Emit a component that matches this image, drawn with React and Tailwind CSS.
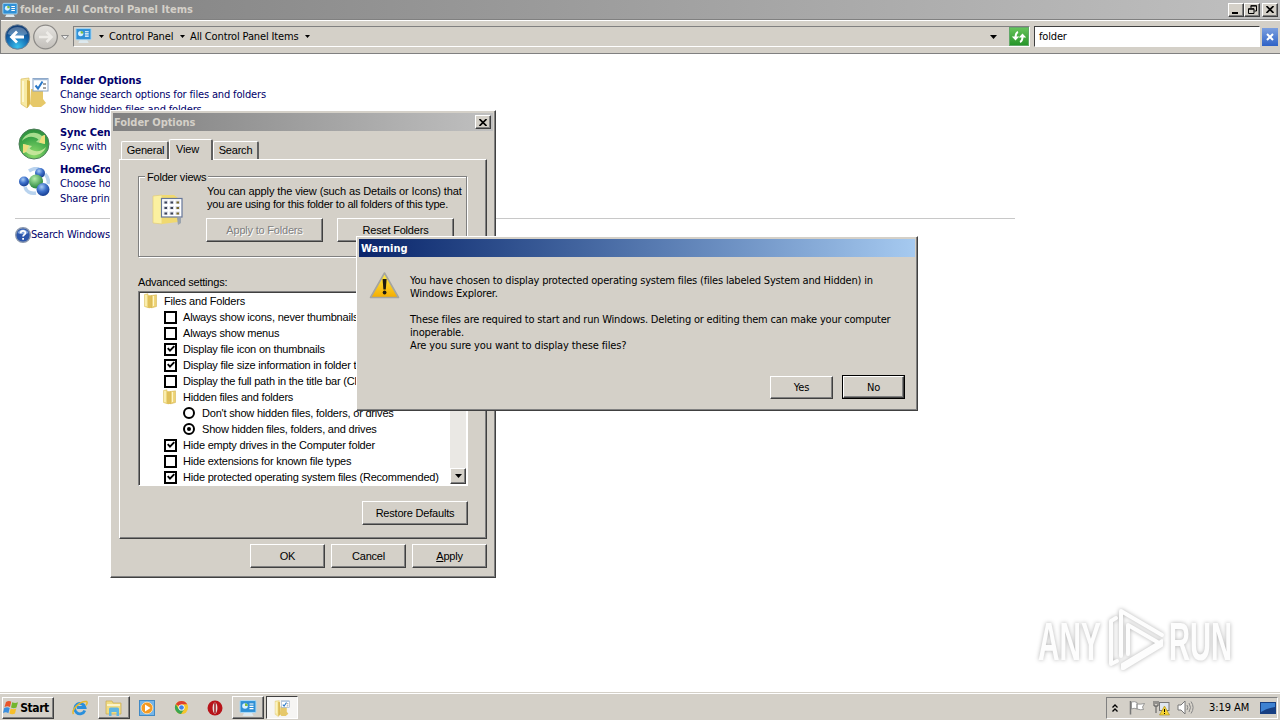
import React from "react";
import clsx from "clsx";

const RAISED =
  "border border-t-white border-l-white border-r-[#404040] border-b-[#404040] shadow-[inset_-1px_-1px_0_#808080]";
const SUNKEN =
  "border border-t-[#808080] border-l-[#808080] border-r-white border-b-white";
const UI = "font-['DejaVu_Sans_Condensed','DejaVu_Sans',sans-serif] text-[11px] font-stretch-condensed tracking-[-0.17px]";
const SANS = "font-['Liberation_Sans',sans-serif] text-[11px] tracking-[-0.2px]";

const SETTINGS = [
  { type: "folder", level: 0, label: "Files and Folders" },
  { type: "check", level: 1, label: "Always show icons, never thumbnails" },
  { type: "check", level: 1, label: "Always show menus" },
  { type: "check", level: 1, label: "Display file icon on thumbnails", on: true },
  { type: "check", level: 1, label: "Display file size information in folder tips", on: true },
  { type: "check", level: 1, label: "Display the full path in the title bar (Classic theme only)" },
  { type: "folder", level: 1, label: "Hidden files and folders" },
  { type: "radio", level: 2, label: "Don't show hidden files, folders, or drives" },
  { type: "radio", level: 2, label: "Show hidden files, folders, and drives", on: true },
  { type: "check", level: 1, label: "Hide empty drives in the Computer folder", on: true },
  { type: "check", level: 1, label: "Hide extensions for known file types" },
  { type: "check", level: 1, label: "Hide protected operating system files (Recommended)", on: true },
];

const LEVELS = ["pl-[3px]", "pl-[22px]", "pl-[41px]"];

function PanelIcon({ className }) {
  return (
    <svg viewBox="0 0 18 18" className={className}>
      <rect x="1" y="1.5" width="16" height="12" rx="1" fill="#3b9bdc" stroke="#a9d6f2" />
      <rect x="2" y="2.5" width="14" height="10" fill="#2f8fd5" />
      <circle cx="6" cy="7" r="2.8" fill="#d8f0ff" />
      <path d="M6 7V4.2A2.8 2.8 0 0 1 8.8 7z" fill="#7fbf3c" />
      <path d="M10.5 5h4M10.5 7.3h4M10.5 9.6h4" stroke="#fff" strokeWidth="1.2" />
      <path d="M5 14h8l1.5 3h-11z" fill="#dce8ee" />
    </svg>
  );
}

function FolderIcon({ className }) {
  return (
    <svg viewBox="0 0 16 16" className={className}>
      <path d="M1.500 1.500 5 .8v13.900l-3.500-1.200z" fill="#f4e08a" stroke="#d9bd58" strokeWidth=".5" />
      <path d="M5 2.200h4v12.500l-3 .5-1-.5z" fill="#e0c05a" />
      <path d="M8.500 2.500l5-.7v11.700l-5 1.400z" fill="#eed273" stroke="#cfae4b" strokeWidth=".5" />
      <path d="M3 2v11M10.500 3v10" stroke="#fdf6c8" strokeWidth="1.200" />
    </svg>
  );
}

function FolderOptionsIcon({ className }) {
  return (
    <svg viewBox="0 0 32 34" className={className}>
      <path d="M13 14h12v10l3 4-5 4h-8l-3-3z" fill="#e6c869" />
      <path d="M3 4l8-1v28l-2 2-6-4z" fill="#f7e9a2" stroke="#d8bd62" strokeWidth=".7" />
      <path d="M9 5l3 1v23l-3 4z" fill="#d8b54c" />
      <path d="M5 6v21" stroke="#fffbdc" strokeWidth="1.500" />
      <rect x="15" y="3.500" width="15" height="12.500" fill="#fff" stroke="#8aa4c6" />
      <path d="M15.500 4.500h14" stroke="#9fb8d6" strokeWidth="1.500" />
      <path d="M17.500 10.500l2.500 3 4.500-7" fill="none" stroke="#2a78c8" strokeWidth="2" />
      <path d="M25 9h3M25 13h3" stroke="#444" />
    </svg>
  );
}

function SyncIcon() {
  return (
    <svg viewBox="0 0 32 32" className="size-8">
      <defs>
        <radialGradient id="sync" cx=".5" cy=".85" r=".9">
          <stop offset="0" stopColor="#8fdc6c" />
          <stop offset=".6" stopColor="#3da648" />
          <stop offset="1" stopColor="#2a8a3a" />
        </radialGradient>
      </defs>
      <circle cx="16" cy="16" r="15" fill="url(#sync)" stroke="#4d7d58" />
      <path d="M4 13C7 5 17 2 24 8l3-1v9l-9-2 2.500-2.500C15 7 8 8.500 4 13z" fill="#a7dd8e" />
      <path d="M28 19C25 27 15 30 8 24l-3 1v-9l9 2-2.500 2.500C17 25 24 23.500 28 19z" fill="#c4e59a" />
      <path d="M24 8l3-1v9l-6-1.400zM8 24l-3 1v-9l6 1.400z" fill="#ecdf7c" />
    </svg>
  );
}

function HomeGroupIcon() {
  return (
    <svg viewBox="0 0 32 30" className="h-[30px] w-8">
      <defs>
        <radialGradient id="ball" cx=".4" cy=".3" r=".7">
          <stop offset="0" stopColor="#a9ccf4" />
          <stop offset=".5" stopColor="#3f72cc" />
          <stop offset="1" stopColor="#153d92" />
        </radialGradient>
        <radialGradient id="green" cx=".4" cy=".3" r=".7">
          <stop offset="0" stopColor="#b5edab" />
          <stop offset="1" stopColor="#23833a" />
        </radialGradient>
      </defs>
      <path d="M7 20c1 4 5 7 11 6M27 7c3 3 4 6 3 10M11 4c3-2 7-3 10-2" fill="none" stroke="#b9d3ee" strokeWidth="3.500" />
      <circle cx="22" cy="6" r="5" fill="url(#ball)" />
      <circle cx="6" cy="14.500" r="5" fill="url(#ball)" />
      <circle cx="18" cy="14.500" r="7" fill="url(#green)" />
      <circle cx="25" cy="22.500" r="6.500" fill="url(#ball)" />
    </svg>
  );
}

function HelpIcon() {
  return (
    <svg viewBox="0 0 16 16" className="size-4">
      <circle cx="8" cy="8" r="7.300" fill="#2c56ab" stroke="#8a98ae" strokeWidth="1.400" />
      <path d="M2.500 6a6 6 0 0 1 11 0Q8 8.500 2.500 6z" fill="#7fa3dc" />
      <path d="M5.600 6.300C5.600 3 10.500 3.200 10.400 6c0 1.600-2.300 1.700-2.300 3.600M8.100 11v1.800" fill="none" stroke="#fff" strokeWidth="1.800" />
    </svg>
  );
}

function FolderViewsIcon() {
  return (
    <svg viewBox="0 0 32 32" className="size-8">
      <path d="M1 2l9-1v29l-9-1z" fill="#fbf0a0" stroke="#e3cd78" strokeWidth=".7" />
      <path d="M10 1h12l4 3v24l-16 2z" fill="#f0d970" />
      <path d="M25 24h4v5l-3 2z" fill="#9aa3ad" />
      <rect x="9.500" y="4.500" width="20.500" height="18.500" fill="#fff" stroke="#66779a" strokeWidth="1.200" />
      {[7.5, 13, 18.5].map((y) =>
        [11.5, 17.5, 23.5].map((x) => (
          <g key={`${x}-${y}`}>
            <rect x={x} y={y - 1} width="4.500" height="3.500" fill="#d9dce6" />
            <rect x={x + 1} y={y} width="2.500" height="2" fill={x > 23 ? "#7a6a2c" : "#3c4358"} />
          </g>
        ))
      )}
    </svg>
  );
}

function WarningIcon() {
  return (
    <svg viewBox="0 0 32 30" className="h-[30px] w-8">
      <defs>
        <linearGradient id="warn" x1="0" y1="0" x2="0" y2="1">
          <stop offset="0" stopColor="#ffee4a" />
          <stop offset="1" stopColor="#f4ac00" />
        </linearGradient>
      </defs>
      <path d="M15.500 3 29.500 27.500h-28z" fill="url(#warn)" stroke="#a5a5a0" strokeWidth="1.600" strokeLinejoin="round" />
      <path d="M13.600 9h4l-.8 10.500h-2.400z" fill="#1c1a10" />
      <circle cx="15.600" cy="22.500" r="1.900" fill="#1c1a10" />
    </svg>
  );
}

function Caret({ className }) {
  return (
    <svg viewBox="0 0 7 4" className={clsx("shrink-0", className)}>
      <path d="M0 0h7L3.500 4z" fill="#000" />
    </svg>
  );
}

function CloseGlyph() {
  return (
    <svg viewBox="0 0 8 7" className="h-[7px] w-2">
      <path d="M.5 0 7.500 7M7.500 0 .5 7" stroke="#000" strokeWidth="1.600" />
    </svg>
  );
}

function Button({ children, className, disabled }) {
  return (
    <button
      className={clsx(
        RAISED,
        "flex shrink-0 items-center justify-center bg-[#d4d0c8] whitespace-nowrap",
        disabled && "text-[#808080] [text-shadow:1px_1px_0_#fff]",
        className
      )}
    >
      {children}
    </button>
  );
}

function ExplorerHeader() {
  return (
    <header className={UI}>
      <div className="flex h-[19px] items-center bg-linear-to-r from-[#808080] to-[#c0c0c0] pr-0.5 pl-0.5">
        <PanelIcon className="size-4" />
        <span className="ml-0.5 flex-1 pt-0.5 font-bold tracking-[0.03px] text-[#d4d0c8]">folder - All Control Panel Items</span>
        <Button className="h-[14px] w-4">
          <span className="mt-1.5 mr-0.5 h-0.5 w-1.5 bg-black" />
        </Button>
        <Button className="h-[14px] w-4">
          <svg viewBox="0 0 9 9" className="size-[9px]">
            <path d="M3 3V.7h5.500V6H6.500M2.500 1h6" fill="none" stroke="#000" />
            <path d="M.5 3.700h5.500V8.500H.5zM.5 4.200H6" fill="none" stroke="#000" />
          </svg>
        </Button>
        <Button className="ml-0.5 h-[14px] w-4">
          <CloseGlyph />
        </Button>
      </div>
      <div className="flex h-[35px] items-center border-t border-b border-l border-[#808080] bg-[#d4d0c8] pl-[3px] shadow-[inset_0_1px_0_#fff]">
        <svg viewBox="0 0 66 28" className="h-7 w-[66px]">
          <defs>
            <radialGradient id="back" cx=".5" cy=".9" r=".8">
              <stop offset="0" stopColor="#39c1ee" />
              <stop offset=".6" stopColor="#1467ae" />
              <stop offset="1" stopColor="#123f78" />
            </radialGradient>
            <linearGradient id="fwd" x1="0" y1="0" x2="0" y2="1">
              <stop offset="0" stopColor="#e6e4e0" />
              <stop offset="1" stopColor="#c2bfba" />
            </linearGradient>
          </defs>
          <circle cx="13.500" cy="14" r="12.200" fill="url(#back)" stroke="#6d7f92" />
          <path d="M3.500 11a10.500 10 0 0 1 20 0Q13 15 3.500 11z" fill="#fff" opacity=".28" />
          <path d="M20 14H8M13 8.500 7.500 14l5.500 5.500" fill="none" stroke="#fff" strokeWidth="2.800" />
          <circle cx="41.500" cy="14" r="11.800" fill="url(#fwd)" stroke="#8d8b88" strokeWidth="1.300" />
          <path d="M35 14h12M42.500 9l5 5-5 5" fill="none" stroke="#eeece8" strokeWidth="2.500" />
          <path d="M57.500 12.500h7l-3.500 4z" fill="#eee" stroke="#8a8a8a" />
        </svg>
        <div className={clsx(SUNKEN, "ml-[3px] flex h-[21px] w-[957px] items-center pl-px")}>
          <PanelIcon className="-mt-0.5 size-[17px]" />
          <Caret className="ml-[7px] h-[3px] w-[5px]" />
          <span className="ml-[5px] w-[66px] pt-px tracking-[-0.08px] whitespace-nowrap">Control Panel</span>
          <Caret className="mr-[5px] ml-[5px] h-[3px] w-[5px]" />
          <span className="w-[109px] pt-px tracking-[-0.14px] whitespace-nowrap">All Control Panel Items</span>
          <Caret className="ml-1.5 h-[3px] w-[5px]" />
          <Caret className="mr-3 ml-auto h-1 w-[7px]" />
          <span className="flex h-[19px] w-5 items-center justify-center border border-[#62a868] bg-linear-to-b from-[#65c35a] to-[#25962a]">
            <svg viewBox="0 0 16 14" className="h-3.5 w-4">
              <path d="M7 2Q4.500 3 4.500 8M9 12q2.500-1 2.500-6" fill="none" stroke="#fff" strokeWidth="2" />
              <path d="M.8 6.500h7.400L4.500 10.500zM7.800 7.500h7.400L11.500 3.500z" fill="#fff" />
            </svg>
          </span>
        </div>
        <div className="ml-1 flex h-[21px] w-[226px] items-center border border-t-[#404040] border-r-white border-b-white border-l-[#404040] bg-white pt-0.5 pl-1">
          folder
        </div>
        <span className="ml-0.5 flex h-[18px] w-4 items-center justify-center bg-linear-to-b from-[#7c9fdf] to-[#2f62c6]">
          <svg viewBox="0 0 8 8" className="size-2">
            <path d="M1 1l6 6M7 1 1 7" stroke="#fff" strokeWidth="2" />
          </svg>
        </span>
      </div>
    </header>
  );
}

function Entry({ icon, title, links, className }) {
  return (
    <section className={clsx("flex", className)}>
      <div className="w-[42px] shrink-0">{icon}</div>
      <div className="whitespace-nowrap">
        <h2 className="h-[13px] leading-[14px] font-bold tracking-[-0.05px]">{title}</h2>
        {links.map((link) => (
          <p key={link} className="h-[15px] leading-[15px] tracking-[-0.15px]">
            {link}
          </p>
        ))}
      </div>
    </section>
  );
}

function ControlPanelItems() {
  return (
    <main className={clsx(UI, "relative flex-1 pt-5 text-[#00006b]")}>
      <div className="flex flex-col pl-[18px]">
        <Entry
          icon={<FolderOptionsIcon className="mt-px h-[34px] w-8" />}
          title="Folder Options"
          links={["Change search options for files and folders", "Show hidden files and folders"]}
        />
        <Entry className="mt-[9px]" icon={<div className="mt-0.5"><SyncIcon /></div>} title="Sync Center" links={["Sync with"]} />
        <Entry className="mt-[3px]" icon={<div className="mt-1"><HomeGroupIcon /></div>} title="HomeGroup" links={["Choose homegroup", "Share printers"]} />
      </div>
      <div className="mt-3 ml-[15px] h-px w-[1000px] bg-[#c8c8c8]" />
      <div className="mt-2 ml-[15px] flex items-center whitespace-nowrap">
        <HelpIcon />
        Search Windows
      </div>
      <Watermark />
    </main>
  );
}

function Watermark() {
  return (
    <svg
      viewBox="0 0 220 80"
      className="absolute right-[30px] bottom-2 h-20 w-[220px] overflow-visible drop-shadow-[0_0_2px_rgba(0,0,0,0.3)]"
    >
      <g fill="#fdfdfd" fontFamily="Liberation Sans" fontWeight="700" fontSize="53" letterSpacing="0">
        <text transform="translate(8 56) scale(.563 1)">ANY</text>
        <text transform="translate(139 56) scale(.549 1)">RUN</text>
      </g>
      <g fill="none" stroke="#fdfdfd" strokeWidth="4" strokeLinejoin="round" strokeLinecap="round">
        <path d="M86 14 81 17V60L87 57" />
        <path d="M91 52V7L132 31" />
        <path d="M98 50V21L129 39" />
        <path d="M92 65V60L132 36V42L94 65z" fill="#fdfdfd" strokeWidth="2" />
      </g>
    </svg>
  );
}

function SettingMark({ type, on }) {
  if (type === "folder") return <FolderIcon className="size-4" />;
  if (type === "radio") {
    return (
      <span className="ml-0.5 flex size-3 items-center justify-center rounded-full border-2 border-black bg-white">
        {on && <span className="size-1 rounded-full bg-black" />}
      </span>
    );
  }
  return (
    <span className="ml-0.5 flex size-[13px] items-center justify-center border-2 border-black bg-white">
      {on && (
        <svg viewBox="0 0 8 8" className="size-2">
          <path d="M.7 3.200 3 5.700 7.300 1.200" fill="none" stroke="#000" strokeWidth="1.900" />
        </svg>
      )}
    </span>
  );
}

function Tab({ children, active, className }) {
  return (
    <div
      className={clsx(
        "flex justify-center rounded-t-[2px] border-t border-r-2 border-l border-t-white border-r-[#606060] border-l-white bg-[#d4d0c8]",
        active ? "relative z-10 -mb-px h-[21px] pt-px" : "h-[18px]",
        className
      )}
    >
      {children}
    </div>
  );
}

function FolderOptionsDialog() {
  return (
    <div className={clsx(RAISED, SANS, "absolute top-[110px] left-[110px] flex h-[468px] w-[386px] flex-col bg-[#d4d0c8] p-0.5 text-black")}>
      <div className={clsx(UI, "flex h-[18px] items-center bg-linear-to-r from-[#808080] to-[#c0c0c0] pr-0.5 pl-px font-bold text-[#d4d0c8]")}>
        <span className="flex-1 pt-0.5 tracking-[-0.05px]">Folder Options</span>
        <Button className="h-[14px] w-4">
          <CloseGlyph />
        </Button>
      </div>
      <div className="flex flex-1 flex-col px-1.5 pt-2">
        <div className="flex items-end pl-0.5">
          <Tab className="w-12 pl-0.5">General</Tab>
          <Tab active className="w-11 pr-1.5">View</Tab>
          <Tab className="w-[46px]">Search</Tab>
        </div>
        <div className={clsx(RAISED, "h-[380px] w-[368px] px-[18px] pt-4")}>
          <div className="h-[81px] w-[329px] border border-[#808080] pl-[11px] shadow-[1px_1px_0_#fff,inset_1px_1px_0_#fff]">
            <div className="-mt-1.5 -ml-[5px] h-3 w-[63px] bg-[#d4d0c8] pl-0.5 leading-3 whitespace-nowrap">Folder views</div>
            <div className="flex">
              <div className="mt-[11px] w-[57px] pl-0.5">
                <FolderViewsIcon />
              </div>
              <div className="whitespace-nowrap">
                <p className="mt-0.5 leading-[13px] tracking-[-0.11px]">You can apply the view (such as Details or Icons) that</p>
                <p className="leading-[13px] tracking-[-0.23px]">you are using for this folder to all folders of this type.</p>
                <div className="mt-[7px] -ml-px flex gap-3.5">
                  <Button disabled className="h-6 w-[117px]">Apply to Folders</Button>
                  <Button className="h-6 w-[117px]">Reset Folders</Button>
                </div>
              </div>
            </div>
          </div>
          <div className="mt-[17px] leading-4">Advanced settings:</div>
          <div className="mt-px flex h-[195px] w-[330px] overflow-hidden border border-t-[#808080] border-r-white border-b-white border-l-[#808080] bg-white shadow-[inset_1px_1px_0_#404040]">
            <div className="flex-1 overflow-hidden pt-px pl-px">
              {SETTINGS.map(({ type, level, label, on }) => (
                <div key={label} className={clsx("flex h-4 items-center", LEVELS[level])}>
                  <div className="w-[21px] shrink-0">
                    <SettingMark type={type} on={on} />
                  </div>
                  <span className="whitespace-nowrap">{label}</span>
                </div>
              ))}
            </div>
            <div className="mr-px mb-px flex w-4 flex-col justify-end bg-[#eae8e4]">
              <Button className="h-4 w-4">
                <Caret className="h-1 w-[7px]" />
              </Button>
            </div>
          </div>
          <div className="mt-[15px] flex justify-end">
            <Button className="h-6 w-[106px]">Restore Defaults</Button>
          </div>
        </div>
        <div className="mt-[5px] flex justify-end gap-1.5">
          <Button className="h-6 w-[75px]">OK</Button>
          <Button className="h-6 w-[75px]">Cancel</Button>
          <Button className="h-6 w-[75px]">
            <span><u>A</u>pply</span>
          </Button>
        </div>
      </div>
    </div>
  );
}

function WarningDialog() {
  return (
    <div className={clsx(RAISED, UI, "absolute top-[236px] left-[356px] flex h-[175px] w-[562px] flex-col bg-[#d4d0c8] p-0.5 text-black")}>
      <div className="flex h-[18px] items-center bg-linear-to-r from-[#0a246a] to-[#a6caf0] pt-0.5 pl-0.5 font-bold tracking-[-0.02px] text-white">Warning</div>
      <div className="flex pt-[17px] pl-[10px]">
        <div className="-mt-1 w-[41px]">
          <WarningIcon />
        </div>
        <div className="leading-[13px] whitespace-nowrap">
          <p className="tracking-[-0.19px]">You have chosen to display protected operating system files (files labeled System and Hidden) in</p>
          <p>Windows Explorer.</p>
          <p className="mt-[13px] tracking-[-0.2px]">These files are required to start and run Windows. Deleting or editing them can make your computer</p>
          <p>inoperable.</p>
          <p className="tracking-[-0.12px]">Are you sure you want to display these files?</p>
        </div>
      </div>
      <div className="mt-auto mb-[9px] flex items-center justify-end gap-[9px] pr-2.5">
        <Button className="h-[23px] w-[63px] pt-0.5 pr-2 pl-2">Yes</Button>
        <div className="border border-black">
          <Button className="h-[22px] w-[61px] pt-0.5 pr-1.5 pl-1.5">No</Button>
        </div>
      </div>
    </div>
  );
}

function TaskSlot({ children, state }) {
  return (
    <div
      className={clsx(
        "flex h-[23px] w-8 items-center justify-center",
        state === "open" && RAISED,
        state === "active" && "border border-t-[#404040] border-r-white border-b-white border-l-[#404040] bg-[#f6f5f3]"
      )}
    >
      {children}
    </div>
  );
}

function Taskbar() {
  return (
    <footer className={clsx(UI, "flex h-7 items-center border-t border-[#d4d0c8] bg-[#d4d0c8] pt-0.5 pr-0.5 pl-0.5 shadow-[inset_0_1px_0_#fff]")}>
      <Button className="mr-[10px] h-[22px] w-[52px] pr-1 text-[12px] font-bold tracking-[-0.4px]">
        <svg viewBox="0 0 16 15" className="mr-px h-[15px] w-4">
          <path d="M3 2q3-2 5.200-.2L7 7Q4.500 5.300 1.500 7z" fill="#e8552a" />
          <path d="M9.200 2.200q2.800 1.500 5.800 0L13.500 7.500q-2.800 1.300-5.500 0z" fill="#74b62e" />
          <path d="M1.200 8q3-1.700 5.500 0l-1.300 5.200Q3 11.600 0 13z" fill="#3a8ede" />
          <path d="M7.700 8.500q2.800 1.500 5.500 0L12 13.500q-2.800 1.500-5.600 0z" fill="#f7bf2a" />
        </svg>
        Start
      </Button>
      <div className="flex gap-[1.7px]">
        <TaskSlot>
          <svg viewBox="0 0 16 16" className="size-4">
            <path d="M12.800 10.500A5.200 5.200 0 1 1 13 7.500H5" fill="none" stroke="#2a8fdc" strokeWidth="2.800" />
            <path d="M1.500 14C-1 10 8 .5 14.500 1.500c1.200.5.500 2.500-.5 3.800" fill="none" stroke="#e6b82c" strokeWidth="1.500" />
          </svg>
        </TaskSlot>
        <TaskSlot state="open">
          <svg viewBox="0 0 18 16" className="h-4 w-[18px]">
            <path d="M1 3V1h6l1 2h8v11H1z" fill="#f0dc82" stroke="#c8ab50" strokeWidth=".7" />
            <path d="M2 5h13" stroke="#fffbe0" strokeWidth="1.500" />
            <path d="M4 16V9q0-1.500 1.500-1.500h7Q14 7.500 14 9v7h-2.500v-4h-5v4z" fill="#5fb5e2" />
          </svg>
        </TaskSlot>
        <TaskSlot>
          <svg viewBox="0 0 16 16" className="size-4">
            <rect x=".5" y=".5" width="15" height="15" fill="#75b5e8" stroke="#4089c5" />
            <circle cx="8" cy="8" r="5.800" fill="#f59a22" stroke="#fbd8a2" />
            <path d="M6 4.500 11.500 8 6 11.500z" fill="#fff" />
          </svg>
        </TaskSlot>
        <TaskSlot>
          <svg viewBox="0 0 16 16" className="size-[15px]">
            <circle cx="8" cy="8" r="7" fill="#f5c52c" />
            <path d="M8 8 1.900 4.500A7 7 0 0 1 14.100 4.500H8z" fill="#de3e30" />
            <path d="M1.900 4.500A7 7 0 0 0 7.500 15L11 9.500 5 9.500z" fill="#3aa552" />
            <circle cx="8" cy="8" r="3.300" fill="#fff" />
            <circle cx="8" cy="8" r="2.500" fill="#3f82e8" />
          </svg>
        </TaskSlot>
        <TaskSlot>
          <svg viewBox="0 0 16 16" className="size-4">
            <circle cx="8" cy="8" r="7.500" fill="#b8141a" />
            <ellipse cx="8" cy="8" rx="2.400" ry="5.500" fill="#e9e0dd" />
            <path d="M8 3v10" stroke="#99191c" strokeWidth="1.500" />
          </svg>
        </TaskSlot>
        <TaskSlot state="open">
          <PanelIcon className="size-[18px]" />
        </TaskSlot>
        <TaskSlot state="active">
          <FolderOptionsIcon className="size-[18px]" />
        </TaskSlot>
      </div>
      <div className={clsx(SUNKEN, "ml-auto flex h-[22px] w-[172px] items-center pl-[5px]")}>
        <svg viewBox="0 0 6 8" className="h-2 w-1.5">
          <path d="M.5 3.500 3 1l2.500 2.500M.5 7.500 3 5l2.500 2.500" fill="none" stroke="#000" strokeWidth="1.300" />
        </svg>
        <svg viewBox="0 0 16 15" className="ml-[11px] h-[15px] w-4">
          <path d="M1.500 1v13.500" stroke="#777" strokeWidth="1.500" />
          <path d="M2.500 2q3-1 5.500.5V9q-3-1.500-5.500 0zM8 4q4 .5 7.500-.5L13.500 7l1 2.500q-3 .7-6.500-.5z" fill="#fff" stroke="#858585" strokeWidth=".8" />
        </svg>
        <svg viewBox="0 0 17 16" className="ml-2 h-4 w-[17px]">
          <path d="M1 1v5h4V1M3 6v7M3 1v3" fill="none" stroke="#555" />
          <rect x="6.500" y="2.500" width="9.500" height="8" fill="#dfe6ee" stroke="#777" />
          <path d="M11.500 6 16.500 15h-10z" fill="#f6d433" stroke="#a58a1a" strokeWidth=".6" />
          <path d="M11.500 9v3M11.500 13v1" stroke="#000" />
        </svg>
        <svg viewBox="0 0 17 15" className="ml-[7px] h-[15px] w-[17px]">
          <path d="M1 5h3l4-4v13l-4-4H1z" fill="#fff" stroke="#777" />
          <path d="M10 5q1.500 2.500 0 5M12 3q3 4.500 0 9M14 1.500q4.200 6 0 12" fill="none" stroke="#888" />
        </svg>
        <span className="ml-[15px] pt-px tracking-[-0.05px] whitespace-nowrap">3:19 AM</span>
        <svg viewBox="0 0 16 14" className="mr-px ml-auto h-3.5 w-4">
          <rect width="16" height="12" y="1" fill="#173f82" />
          <path d="M1 2h14v4Q7 7 1 11z" fill="#3e82d2" />
        </svg>
      </div>
    </footer>
  );
}

export default function App() {
  return (
    <div className="relative flex h-[720px] w-[1280px] flex-col overflow-hidden bg-white text-black">
      <ExplorerHeader />
      <ControlPanelItems />
      <Taskbar />
      <FolderOptionsDialog />
      <WarningDialog />
    </div>
  );
}
